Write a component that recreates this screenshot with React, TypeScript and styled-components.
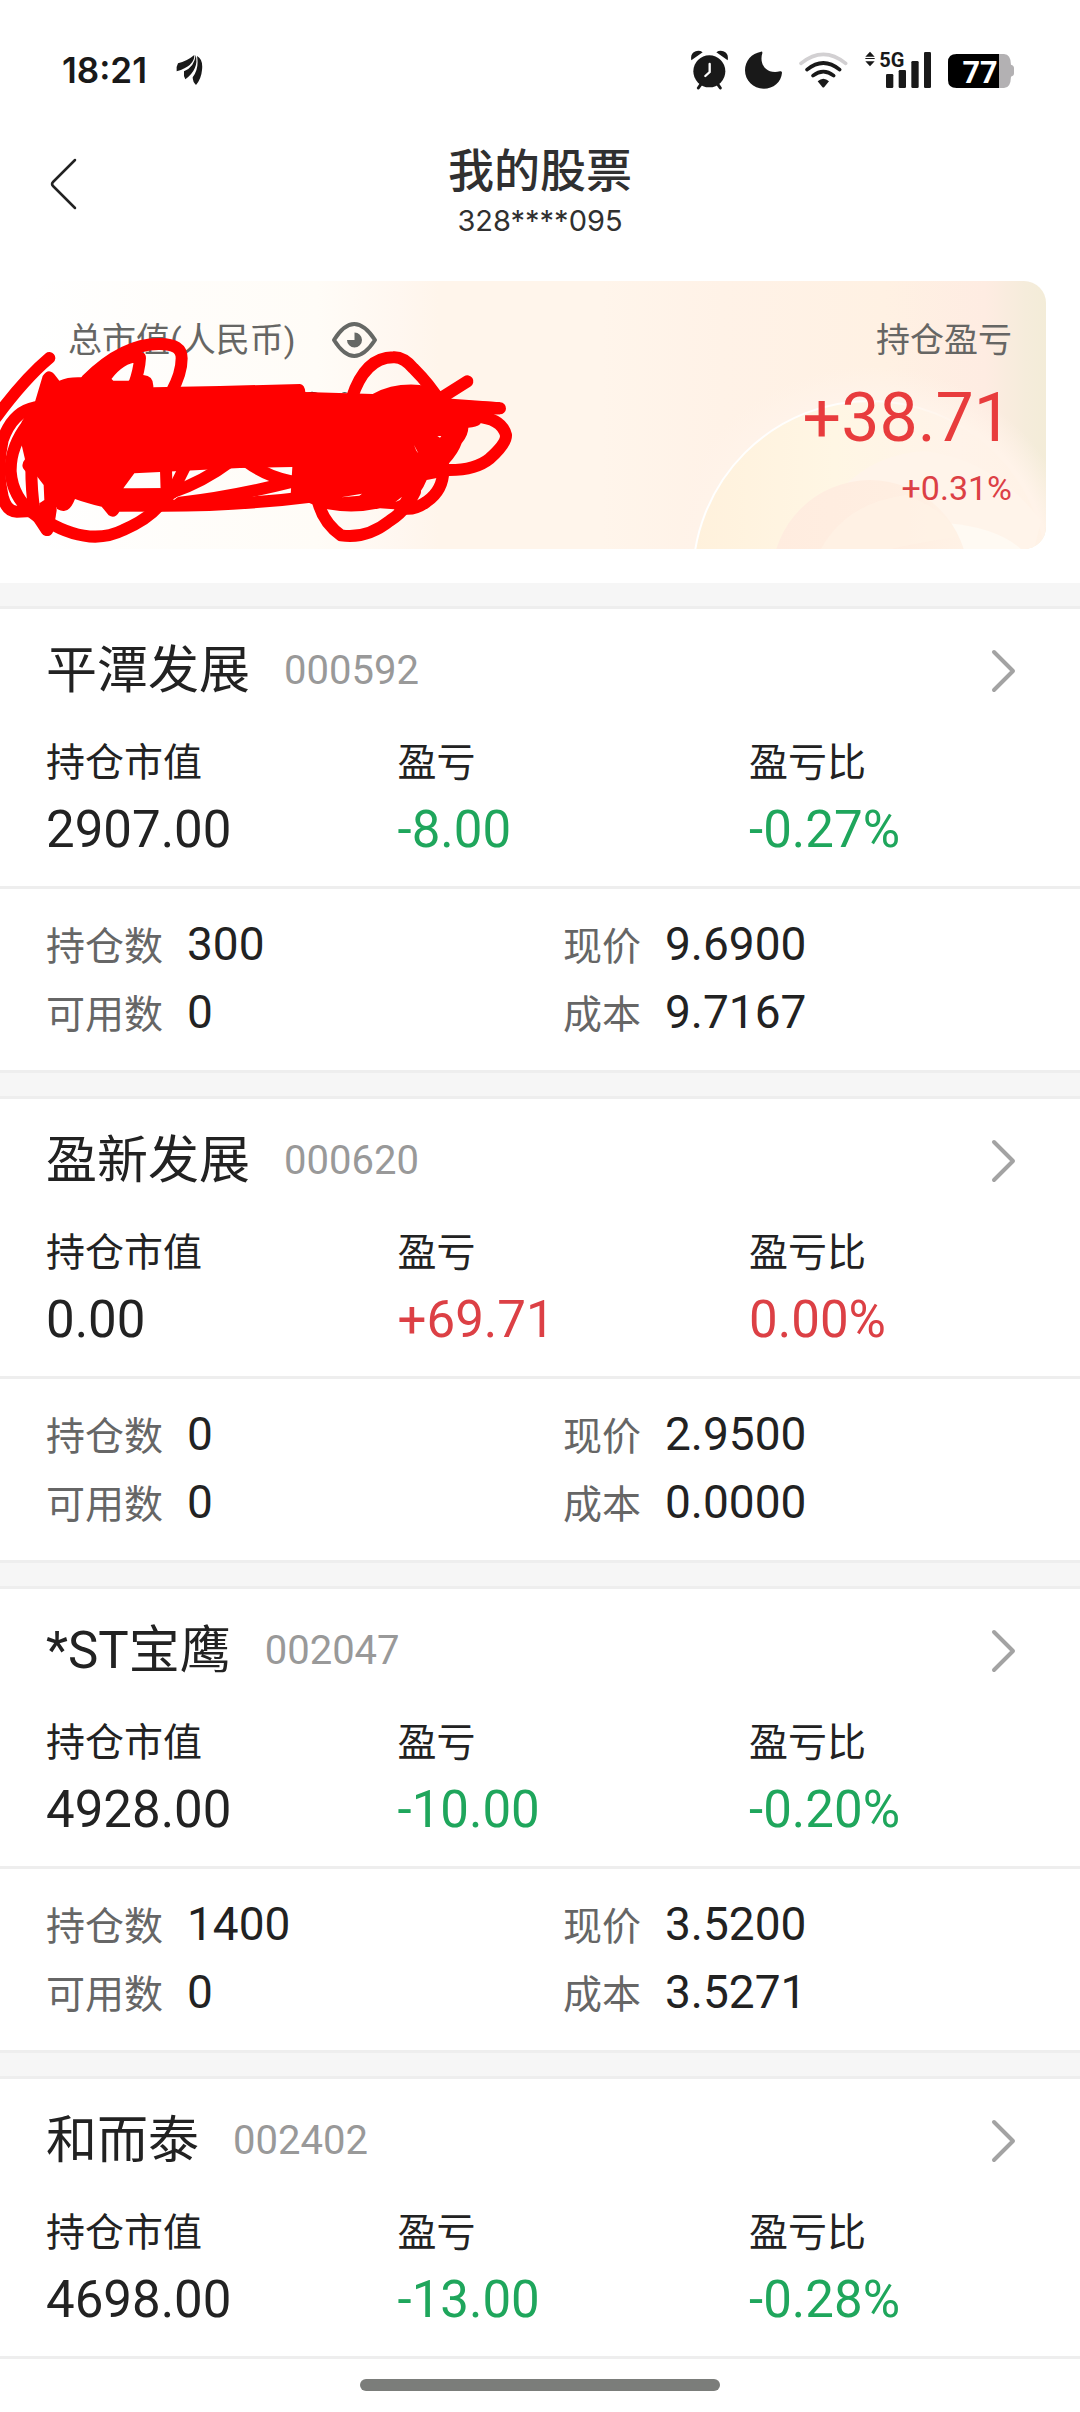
import React from "react";
import styled, { createGlobalStyle } from "styled-components";

const GlobalStyle = createGlobalStyle`
  * { box-sizing: border-box; }
  body {
    margin: 0;
    background: #ffffff;
    color: #222222;
    font-family: Roboto, "Noto Sans CJK SC", sans-serif;
  }
  button { border: 0; padding: 0; background: none; color: inherit; font: inherit; cursor: pointer; }
  h1, h2, p, dl, dt, dd { margin: 0; font-weight: 400; }
`;

type Tone = "plain" | "up" | "down";

const toneColor: Record<Tone, string> = {
  plain: "#222222",
  up: "#dc4045",
  down: "#1fa65c",
};

const Page = styled.div`
  min-height: 100vh;
  display: flex;
  flex-direction: column;
  background: #ffffff;
`;

const StatusBar = styled.div`
  display: flex;
  align-items: center;
  justify-content: space-between;
  height: 139px;
  padding: 0 66px 0 62px;
  color: #191919;
`;

const StatusGroup = styled.div`
  display: flex;
  align-items: center;
  gap: 17px;
`;

const Clock = styled.span`
  margin-right: 12px;
  font-family: Inter, sans-serif;
  font-size: 35px;
  font-weight: 600;
  line-height: 48px;
`;

const NavBar = styled.header`
  display: grid;
  grid-template-columns: 120px 1fr 120px;
`;

const BackButton = styled.button`
  display: flex;
  align-items: center;
  height: 90px;
  padding-left: 50px;
`;

const Heading = styled.div`
  padding-top: 2px;
  text-align: center;
`;

const Title = styled.h1`
  font-size: 46px;
  font-weight: 500;
  line-height: 60px;
  color: #303030;
`;

const Account = styled.p`
  font-family: Inter, sans-serif;
  font-size: 29px;
  line-height: 40px;
  color: #303030;
`;

const Summary = styled.section`
  position: relative;
  padding: 40px 34px 34px;
`;

const SummaryCard = styled.div`
  position: relative;
  display: flex;
  justify-content: space-between;
  padding: 35px 34px 41px;
  border-radius: 22px;
  overflow: hidden;
  background: linear-gradient(
    90deg,
    #ffffff 0%,
    #fffdfa 14%,
    #fffcf7 28%,
    #fff7f0 36%,
    #fff5eb 40%,
    #fff5eb 56%,
    #fff2e7 68%,
    #fff1e3 84%,
    #feece2 94%,
    #f5ecdb 98%,
    #f3ecd8 100%
  );
`;

const Rings = styled.svg`
  position: absolute;
  right: 0;
  bottom: 0;
`;

const SummaryColumn = styled.div<{ $end?: boolean }>`
  position: relative;
  display: flex;
  flex-direction: column;
  align-items: ${(p) => (p.$end ? "flex-end" : "flex-start")};
`;

const SummaryLabel = styled.div`
  display: flex;
  align-items: center;
  gap: 36px;
  font-size: 34px;
  line-height: 48px;
  color: #666664;
`;

const EyeButton = styled.button`
  display: flex;
`;

const Profit = styled.p`
  padding: 14px 0 10px;
  font-size: 68px;
  line-height: 80px;
  color: #e83c3d;
`;

const ProfitRate = styled.p`
  font-size: 34px;
  line-height: 40px;
  color: #dc4045;
`;

const Scribble = styled.svg`
  position: absolute;
  left: 0;
  top: 89px;
  pointer-events: none;
`;

const StockList = styled.main`
  display: flex;
  flex-direction: column;
  gap: 23px;
  padding-top: 23px;
  background: #f6f6f6;
`;

const StockCard = styled.article`
  border-top: 3px solid #eeeeee;
  border-bottom: 3px solid #eeeeee;
  background: #ffffff;
`;

const StockLink = styled.a`
  display: flex;
  align-items: center;
  padding: 26px 64px 28px 46px;
  color: inherit;
  text-decoration: none;
`;

const StockName = styled.h2`
  font-size: 51px;
  line-height: 72px;
`;

const StockCode = styled.span`
  flex: 1;
  padding-left: 34px;
  font-size: 40px;
  line-height: 72px;
  color: #999999;
`;

const Metrics = styled.dl`
  display: grid;
  grid-template-columns: 34fr 34fr 32fr;
  padding: 0 0 22px 46px;
`;

const MetricLabel = styled.dt`
  font-size: 39px;
  line-height: 56px;
`;

const MetricValue = styled.dd<{ $tone: Tone }>`
  padding-top: 5px;
  font-size: 51px;
  line-height: 68px;
  color: ${(p) => toneColor[p.$tone]};
`;

const Details = styled.dl`
  display: grid;
  grid-template-columns: 1fr 1fr;
  padding: 21px 0 24px 46px;
  border-top: 3px solid #eeeeee;
`;

const Detail = styled.div`
  display: flex;
  align-items: baseline;
  gap: 24px;
  height: 68px;
  line-height: 68px;
`;

const DetailLabel = styled.dt`
  font-size: 39px;
  color: #666666;
`;

const DetailValue = styled.dd`
  font-size: 46px;
`;

const GestureArea = styled.footer`
  display: flex;
  justify-content: center;
  padding: 20px 0;
`;

const GestureBar = styled.div`
  width: 33.333%;
  height: 12px;
  border-radius: 6px;
  background: #7b7d7a;
`;

interface Stock {
  name: string;
  code: string;
  metrics: [string, string, Tone][];
  details: [string, string][];
}

const stocks: Stock[] = [
  {
    name: "平潭发展",
    code: "000592",
    metrics: [["持仓市值", "2907.00", "plain"], ["盈亏", "-8.00", "down"], ["盈亏比", "-0.27%", "down"]],
    details: [["持仓数", "300"], ["现价", "9.6900"], ["可用数", "0"], ["成本", "9.7167"]],
  },
  {
    name: "盈新发展",
    code: "000620",
    metrics: [["持仓市值", "0.00", "plain"], ["盈亏", "+69.71", "up"], ["盈亏比", "0.00%", "up"]],
    details: [["持仓数", "0"], ["现价", "2.9500"], ["可用数", "0"], ["成本", "0.0000"]],
  },
  {
    name: "*ST宝鹰",
    code: "002047",
    metrics: [["持仓市值", "4928.00", "plain"], ["盈亏", "-10.00", "down"], ["盈亏比", "-0.20%", "down"]],
    details: [["持仓数", "1400"], ["现价", "3.5200"], ["可用数", "0"], ["成本", "3.5271"]],
  },
  {
    name: "和而泰",
    code: "002402",
    metrics: [["持仓市值", "4698.00", "plain"], ["盈亏", "-13.00", "down"], ["盈亏比", "-0.28%", "down"]],
    details: [],
  },
];

const LeafIcon = () => (
  <svg width="27" height="32" viewBox="44 30 81 96" fill="currentColor" aria-hidden="true">
    <path d="M46 82 Q44 68 50 58 Q76 52 99 33 Q100 66 46 82Z" />
    <path d="M72 106 Q66 96 68 82 Q100 68 103 33 Q114 74 72 106Z" />
    <path d="M104 123 Q94 114 94 100 Q114 74 107 36 Q126 46 122 78 Q120 104 104 123Z" />
  </svg>
);

const AlarmIcon = () => (
  <svg width="37" height="40" viewBox="27 30 111 120" aria-hidden="true">
    <circle cx="82" cy="94" r="48" fill="currentColor" />
    <path d="M28 61 Q24 40 41 34 Q52 30 62 37Z M137 61 Q141 40 124 34 Q113 30 103 37Z" fill="currentColor" />
    <path d="M56 134 L49 144 M108 134 L115 144" stroke="currentColor" strokeWidth="9" strokeLinecap="round" />
    <path d="M83 72 V96 L70 108" fill="none" stroke="#fff" strokeWidth="7" strokeLinecap="round" />
  </svg>
);

const MoonIcon = () => (
  <svg width="37" height="40" viewBox="195 30 111 120" fill="currentColor" aria-hidden="true">
    <path d="M243 35 Q248 34 247 40 C238 66 252 104 300 94 Q306 92 306 98 C304 126 280 146 251 146 C220 146 195 122 195 91 C195 62 215 40 243 35Z" />
  </svg>
);

const WifiIcon = () => (
  <svg width="49" height="40" viewBox="362 30 147 120" fill="none" strokeLinecap="round" aria-hidden="true">
    <path d="M368 70 Q435 16 502 70" stroke="#d2d0d2" strokeWidth="11" />
    <path d="M386 89 Q435 49 484 89" stroke="currentColor" strokeWidth="11" />
    <path d="M404 107 Q435 83 466 107" stroke="currentColor" strokeWidth="11" />
    <path d="M418 124 Q435 108 452 124 L438 141 Q435 144 432 141Z" fill="currentColor" />
  </svg>
);

const SignalIcon = () => (
  <svg width="66" height="56" viewBox="555 6 198 168" fill="currentColor" role="img" aria-label="5G">
    <path d="M570 35 L584 50 H556Z M570 79 L584 64 H556Z M556 54 H584 V57 H556Z" />
    <rect x="618" y="102" width="22" height="42" rx="4" />
    <rect x="656" y="90" width="22" height="54" rx="4" />
    <rect x="694" y="63" width="22" height="81" rx="4" />
    <rect x="732" y="36" width="21" height="108" rx="4" />
    <text x="598" y="80" fontFamily="Roboto, sans-serif" fontWeight="700" fontSize="60">5G</text>
  </svg>
);

const BatteryIcon = () => (
  <svg width="66" height="56" viewBox="804 6 198 168" role="img" aria-label="77%">
    <path d="M957 42 H972 Q992 42 993 74 Q1002 76 1002 84 V100 Q1002 108 993 110 Q992 144 972 144 H957Z" fill="#b3b1b3" />
    <path d="M957 42 H830 Q804 42 804 66 V120 Q804 144 830 144 H957Z" fill="#000" />
    <text x="900" y="128" textAnchor="middle" fontFamily="Roboto, sans-serif" fontWeight="700" fontSize="92" fill="#fff">77</text>
  </svg>
);

const BackIcon = () => (
  <svg width="27" height="52" viewBox="0 0 27 52" fill="none" stroke="#222" strokeWidth="2.5" strokeLinecap="round" aria-hidden="true">
    <path d="M25 2 L3 24 Q1 26 3 28 L25 50" />
  </svg>
);

const ChevronIcon = () => (
  <svg width="25" height="44" viewBox="0 0 25 44" fill="none" stroke="#a3a3a3" strokeWidth="4" strokeLinecap="round" strokeLinejoin="round" aria-hidden="true">
    <path d="M3 3 L22 22 L3 41" />
  </svg>
);

const EyeIcon = () => (
  <svg width="47" height="36" viewBox="0 0 47 36" fill="none" aria-hidden="true">
    <path d="M3 18 Q23 -14 44 18 Q23 50 3 18Z" stroke="#666865" strokeWidth="4" strokeLinejoin="round" />
    <path d="M23.500 10.500 A7.500 7.500 0 1 1 16 18 H23.500Z" fill="#666865" />
  </svg>
);

const RingArt = () => (
  <Rings width="400" height="268" viewBox="0 0 400 268" aria-hidden="true">
    <defs>
      <linearGradient id="disc" x1="0" y1="0" x2="1" y2="0">
        <stop offset="0" stopColor="#fff1dc" />
        <stop offset="0.4" stopColor="#fff6e4" />
        <stop offset="0.75" stopColor="#fff3e9" />
        <stop offset="1" stopColor="#fff2e6" />
      </linearGradient>
      <linearGradient id="core" x1="0" y1="0" x2="1" y2="0">
        <stop offset="0" stopColor="#ffecdf" />
        <stop offset="0.6" stopColor="#ffeee1" />
        <stop offset="1" stopColor="#fff2e6" />
      </linearGradient>
      <linearGradient id="rim" x1="0" y1="0" x2="1" y2="0">
        <stop offset="0" stopColor="#ffffff" />
        <stop offset="0.4" stopColor="#ffffff" stopOpacity="0.9" />
        <stop offset="0.8" stopColor="#ffffff" stopOpacity="0" />
      </linearGradient>
      <radialGradient id="halo">
        <stop offset="0.85" stopColor="#fff3e9" />
        <stop offset="1" stopColor="#fff3e9" stopOpacity="0" />
      </radialGradient>
    </defs>
    <circle cx="224" cy="297" r="212" fill="url(#halo)" />
    <circle cx="224" cy="297" r="177" fill="url(#disc)" stroke="url(#rim)" strokeWidth="2" />
    <path d="M195 208 Q230 172 280 170 Q350 180 395 240 L388 268 H300Z" fill="#fff4ea" />
    <path d="M300 242 Q350 246 375 268 H300Z" fill="#fffaf3" />
    <circle cx="224" cy="297" r="98" fill="url(#core)" />
    <path d="M175 268 Q200 222 260 214 Q290 225 306 244 L312 256 Q270 262 245 268Z" fill="#fff2e6" opacity="0.7" />
  </Rings>
);

const ScribbleArt = () => (
  <Scribble width="520" height="220" viewBox="0 0 1560 660" aria-hidden="true">
    <path d="M918 190 Q935 180 956 190Z M1024 190 Q1034 183 1044 190Z" fill="#222" />
    <g fill="red">
      <path d="M105 215 L128 138 Q148 108 170 142 L178 152 Q205 140 245 142 L320 133 L340 152 L385 152 L430 135 Q462 137 460 172 L660 168 L900 162 Q914 164 916 186 L1118 192 Q1180 158 1260 165 L1320 183 L1355 206 L1500 217 V253 L1445 255 L1441 282 Q1430 292 1405 293 Q1405 315 1385 340 Q1375 370 1345 402 L1330 440 L1280 450 Q1265 490 1215 540 L1140 535 Q1080 548 1020 543 L977 537 L935 522 L872 495 L877 411 L720 414 L480 426 L403 430 L370 475 L480 475 L520 508 L500 543 L358 545 Q345 568 326 556 L305 530 Q260 520 225 507 Q210 545 190 543 Q168 540 168 530 L164 580 L120 600 L118 520 L133 510 L131 465 L112 440 L78 425 Q58 408 75 388 L65 345 V275Z" />
    </g>
    <g fill="none" stroke="red" strokeWidth="36" strokeLinecap="round" strokeLinejoin="round">
      <path d="M148 84 Q75 145 -12 262" />
      <path d="M105 232 Q38 245 8 330 Q-12 420 8 500 Q20 545 50 545 L110 542" />
      <path d="M85 280 Q30 350 32 425 Q38 510 115 562" />
      <path d="M94 410 Q94 490 104 545 L140 600" />
      <path d="M152 540 L142 600" />
      <path d="M140 574 Q270 650 370 600 Q440 570 475 530" />
      <path d="M260 150 Q370 40 480 42 Q546 42 545 85 Q545 130 515 185" />
      <path d="M310 150 Q350 90 400 80 L420 84 Q418 120 402 165" />
      <path d="M360 525 Q660 535 950 498" />
      <path d="M400 495 L500 492" />
      <path d="M540 518 Q700 500 890 452" />
      <path d="M498 420 L500 485" />
      <path d="M560 400 L515 490" />
      <path d="M515 488 Q610 455 690 395" />
      <path d="M740 395 Q800 440 880 456" />
      <path d="M1055 205 Q1095 82 1180 82 Q1210 80 1240 115 Q1290 165 1320 215" />
      <path d="M1402 154 L1320 206" />
      <path d="M1500 235 L1360 228" />
      <path d="M1430 260 Q1505 265 1518 315 Q1520 340 1470 385 Q1425 422 1340 420" />
      <path d="M1325 380 Q1345 470 1280 515 Q1240 545 1200 533" />
      <path d="M952 505 Q965 575 1023 616 Q1100 628 1170 572 Q1220 540 1245 485" />
    </g>
    <g fill="#fff8f2">
      <path d="M1024 502 L1086 491 L1078 497Z M1186 516 L1206 500 L1200 510Z M1242 345 L1255 370 L1249 362Z M1312 318 H1324 L1320 323Z" />
    </g>
    <path d="M27 488 Q38 515 50 526 Q32 524 27 488Z" fill="#ffffff" />
  </Scribble>
);

export default function App() {
  return (
    <Page>
      <GlobalStyle />
      <StatusBar>
        <StatusGroup>
          <Clock>18:21</Clock>
          <LeafIcon />
        </StatusGroup>
        <StatusGroup>
          <AlarmIcon />
          <MoonIcon />
          <WifiIcon />
          <SignalIcon />
          <BatteryIcon />
        </StatusGroup>
      </StatusBar>
      <NavBar>
        <BackButton aria-label="返回">
          <BackIcon />
        </BackButton>
        <Heading>
          <Title>我的股票</Title>
          <Account>328****095</Account>
        </Heading>
      </NavBar>
      <Summary>
        <SummaryCard>
          <RingArt />
          <SummaryColumn>
            <SummaryLabel>
              <span>总市值(人民币)</span>
              <EyeButton aria-label="显示金额">
                <EyeIcon />
              </EyeButton>
            </SummaryLabel>
          </SummaryColumn>
          <SummaryColumn $end>
            <SummaryLabel>持仓盈亏</SummaryLabel>
            <Profit>+38.71</Profit>
            <ProfitRate>+0.31%</ProfitRate>
          </SummaryColumn>
        </SummaryCard>
        <ScribbleArt />
      </Summary>
      <StockList>
        {stocks.map((stock) => (
          <StockCard key={stock.code}>
            <StockLink href={`#${stock.code}`}>
              <StockName>{stock.name}</StockName>
              <StockCode>{stock.code}</StockCode>
              <ChevronIcon />
            </StockLink>
            <Metrics>
              {stock.metrics.map(([label, value, tone]) => (
                <div key={label}>
                  <MetricLabel>{label}</MetricLabel>
                  <MetricValue $tone={tone}>{value}</MetricValue>
                </div>
              ))}
            </Metrics>
            {stock.details.length > 0 && (
              <Details>
                {stock.details.map(([label, value]) => (
                  <Detail key={label}>
                    <DetailLabel>{label}</DetailLabel>
                    <DetailValue>{value}</DetailValue>
                  </Detail>
                ))}
              </Details>
            )}
          </StockCard>
        ))}
      </StockList>
      <GestureArea>
        <GestureBar />
      </GestureArea>
    </Page>
  );
}
